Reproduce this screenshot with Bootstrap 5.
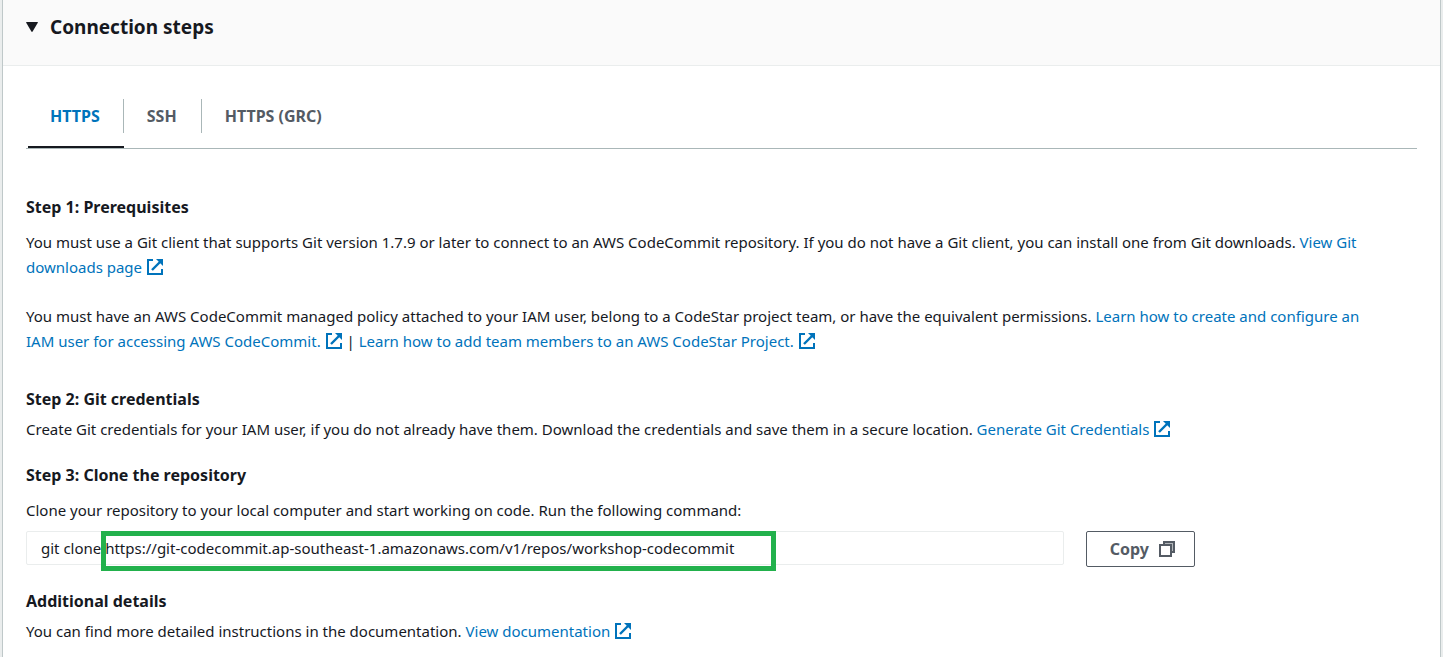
<!DOCTYPE html>
<html lang="en">
<head>
<meta charset="utf-8">
<meta name="viewport" content="width=device-width, initial-scale=1">
<title>Connection steps</title>
<link href="https://cdn.jsdelivr.net/npm/bootstrap@5.3.0/dist/css/bootstrap.min.css" rel="stylesheet">
<style>
  body { background: #eaeded; color: #16191f; font-family: "Noto Sans", "Open Sans", sans-serif; font-size: 15px; line-height: 25px; overflow-x: hidden; }
  a { color: #0073bb; text-decoration: none; }
  a:hover { text-decoration: underline; }
  .panel { margin: 0 2px; border: 1px solid #bfc8c9; border-width: 0 1px; background: #fff; min-height: 100vh; }
  .panel-head { background: #fafafa; border-bottom: 1px solid #eaeded; padding: 13px 23px 24px; }
  .panel-head button { font-size: 19px; line-height: 28px; gap: 12px; color: inherit; }
  .panel-main { padding: 33px 23px 12px; }
  .step-tabs { border-bottom: 1px solid #aab7b8; padding-left: 2px; margin-bottom: 46px; }
  .step-tabs button { font-size: 16px; line-height: 34px; color: #545b64; padding: 0 0 13px; border-bottom: 2px solid transparent !important; }
  .step-tabs span { display: block; padding: 0 24px 0 23px; border-right: 1px solid #aab7b8; }
  .step-tabs button:last-child span { border-right: 0; }
  .step-tabs button:first-child span { padding: 0 23px 0 22px; }
  .step-tabs .active { color: #0073bb; border-bottom-color: #16191f !important; }
  h2 { font-size: 16px; line-height: 24px; font-weight: 700; margin: 0; }
  .ext { width: 18px; height: 18px; vertical-align: -3px; fill: none; stroke: currentColor; stroke-width: 2; }
  .cmd-row { --bs-gutter-x: 22px; margin-bottom: 22px; }
  .cmd-row input { height: 34px; padding: 0 14px; border: 1px solid #eaeded; border-radius: 2px; font-size: 15px; color: #16191f; }
  .btn-copy { height: 36px; padding: 0 18px 0 23px; border: 1px solid #545b64; border-radius: 2px; color: #545b64; background: #fff; font-size: 16px; font-weight: 700; line-height: 34px; gap: 9px; }
  .marker { left: 86px; top: 0; width: 675px; height: 40px; border: 5px solid #22b14c; pointer-events: none; }
  .gap-s { margin-bottom: 6px; }
  .gap-m { margin-bottom: 11px; }
  .gap-l { margin-bottom: 21px; }
  .gap-xl { margin-bottom: 33px; }
</style>
</head>
<body>
<svg class="d-none" aria-hidden="true">
  <symbol id="external" viewBox="0 0 18 18"><path d="M7 2H2v14h14v-5"/><path d="M15 3L6 12" stroke-width="2.400"/><path d="M10 1h7v7l-2.500-2.500-2-2z" fill="currentColor" stroke="none"/></symbol>
</svg>
<main class="panel">
  <header class="panel-head">
    <h1 class="m-0 lh-1 fs-6">
      <button class="border-0 bg-transparent p-0 d-flex align-items-center fw-bold" type="button" aria-expanded="true">
        <svg width="12" height="10" viewBox="0 0 12 10" fill="#16191f" aria-hidden="true"><path d="M.5 0h11q.6.200.3.800L6.600 9.600q-.6.600-1.200 0L.2.800Q0 .2.500 0z"/></svg>
        Connection steps
      </button>
    </h1>
  </header>
  <div class="panel-main">
    <div class="step-tabs d-flex" role="tablist">
      <button class="active border-0 bg-transparent fw-bold" type="button" role="tab" aria-selected="true"><span>HTTPS</span></button>
      <button class="border-0 bg-transparent fw-bold" type="button" role="tab" aria-selected="false"><span>SSH</span></button>
      <button class="border-0 bg-transparent fw-bold" type="button" role="tab" aria-selected="false"><span>HTTPS (GRC)</span></button>
    </div>

    <h2 class="gap-m">Step 1: Prerequisites</h2>
    <p class="mb-4">You must use a Git client that supports Git version 1.7.9 or later to connect to an AWS CodeCommit repository. If you do not have a Git client, you can install one from Git downloads. <a href="#">View Git downloads page&nbsp;<svg class="ext"><use href="#external"/></svg></a></p>
    <p class="gap-xl">You must have an AWS CodeCommit managed policy attached to your IAM user, belong to a CodeStar project team, or have the equivalent permissions. <a href="#">Learn how to create and configure an IAM&nbsp;user&nbsp;for accessing AWS CodeCommit.&nbsp;<svg class="ext"><use href="#external"/></svg></a> | <a href="#">Learn how to add team members to an AWS CodeStar Project.&nbsp;<svg class="ext"><use href="#external"/></svg></a></p>

    <h2 class="gap-s">Step 2: Git credentials</h2>
    <p class="gap-l">Create Git credentials for your IAM user, if you do not already have them. Download the credentials and save them in a secure location. <a href="#">Generate Git Credentials&nbsp;<svg class="ext"><use href="#external"/></svg></a></p>

    <h2 class="gap-m">Step 3: Clone the repository</h2>
    <label class="d-block mb-2" for="command">Clone your repository to your local computer and start working on code. Run the following command:</label>
    <div class="row cmd-row">
      <div class="col-9 position-relative">
        <input class="w-100 d-block" id="command" type="text" readonly value="git clone https://git-codecommit.ap-southeast-1.amazonaws.com/v1/repos/workshop-codecommit">
        <div class="marker position-absolute"></div>
      </div>
      <div class="col-3">
        <button class="btn-copy d-flex align-items-center" type="button">Copy
          <svg width="18" height="18" viewBox="0 0 18 18" fill="none" stroke="#545b64" stroke-width="2" aria-hidden="true"><path d="M6 5V2h10v10h-3" fill="#b3b7bb"/><path d="M2 5h11v11H2z" fill="#fff"/></svg>
        </button>
      </div>
    </div>

    <h2 class="gap-s">Additional details</h2>
    <p class="mb-0">You can find more detailed instructions in the documentation. <a href="#">View documentation&nbsp;<svg class="ext"><use href="#external"/></svg></a></p>
  </div>
</main>
<script src="https://cdn.jsdelivr.net/npm/bootstrap@5.3.0/dist/js/bootstrap.bundle.min.js"></script>
</body>
</html>
